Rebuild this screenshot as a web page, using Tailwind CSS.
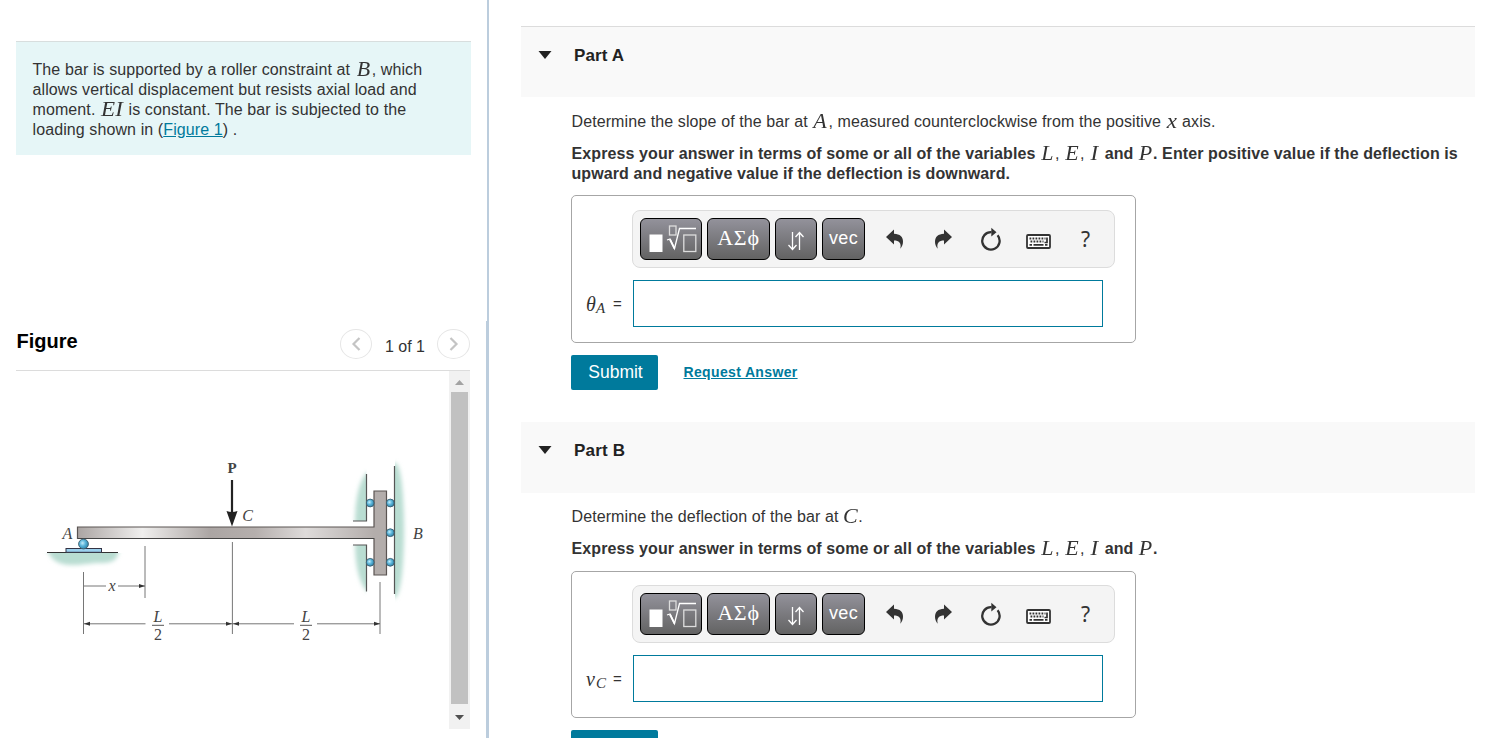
<!DOCTYPE html>
<html lang="en">
<head>
  <meta charset="UTF-8" />
  <title>Bar deflection</title>
  <script src="https://cdn.jsdelivr.net/npm/@tailwindcss/browser@4"></script>
</head>
<body class="bg-white text-[#333] font-['Liberation_Sans',Arial,sans-serif] text-[16px] leading-5 tracking-[0.1px] h-[738px] overflow-hidden">

  <!-- shared icons -->
  <svg class="hidden">
    <symbol id="icon-root" viewBox="0 0 60 40">
      <rect x="8.500" y="15.500" width="13" height="17.500" fill="#fff" />
      <g fill="none" stroke="#ddd" stroke-width="1.3">
        <rect x="28.500" y="7" width="6.500" height="9" />
        <rect x="42.800" y="16" width="12" height="16.500" />
      </g>
      <path d="M26 21l3-1 4.500 9.500 5-20h16.500" fill="none" stroke="#fff" stroke-width="1.300" />
      <path d="M29 20.500l4.500 9" stroke="#fff" stroke-width="1.800" />
    </symbol>
    <symbol id="icon-arrows" viewBox="0 0 18 20">
      <path d="M5.500 1v17M1.500 14l4 4.500 4-4.500M12.500 19V2M8.500 6l4-4.500 4 4.500" fill="none" stroke="#fff" stroke-width="1.300" />
    </symbol>
    <symbol id="icon-undo" viewBox="0 0 18 20">
      <path d="M0 8L8 .5v4.300c6 .2 9 3 9 8 0 2.600-.8 4.700-2.700 7 .6-2.800.5-4.600-.8-6.200-1.200-1.400-3-2-5.500-2v4z" fill="#333" />
    </symbol>
    <symbol id="icon-reset" viewBox="0 0 20 24">
      <path d="M10.500 5.200A8.700 8.700 0 1 0 16.600 8.300" fill="none" stroke="#333" stroke-width="2.300" />
      <path d="M10.300 .8l5.200 4.400-5.200 4.400z" fill="#333" />
    </symbol>
    <symbol id="icon-keyboard" viewBox="0 0 25 16">
      <rect x="1" y="1" width="23" height="13" rx="1" fill="#fff" stroke="#333" stroke-width="1.800" />
      <path d="M3.500 4.500h16M4.500 7.500h13" stroke="#333" stroke-width="2" stroke-dasharray="1.800 1.200" />
      <path d="M3.500 10.800h2.500M7.500 10.800h10M19 10.800h2.500M21 3.500v5h-2.500" fill="none" stroke="#333" stroke-width="1.700" />
    </symbol>
  </svg>

  <div class="flex h-full">
    <!-- left column -->
    <div class="w-[486px] shrink-0 pl-4 pt-[41px] flex flex-col">
      <div class="w-[455px] h-[114px] bg-[#e6f6f7] border-t border-[#d8dede] pl-[16.500px] pt-[18px] whitespace-nowrap">
        The bar is supported by a roller constraint at <i class="inline-block w-[17px] h-5 align-top text-center leading-[18px] font-['Liberation_Serif',serif] text-[20px] scale-x-110">B</i>, which<br>
        allows vertical displacement but resists axial load and<br>
        moment. <i class="inline-block w-[24px] h-5 align-top text-center leading-[18px] font-['Liberation_Serif',serif] text-[20px] scale-x-115">EI</i> is constant. The bar is subjected to the<br>
        loading shown in (<a href="#" class="text-[#007a9c] underline">Figure 1</a>) .
      </div>

      <div class="mt-[166px] w-[454px] h-[50px] border-b border-[#dcdcdc] flex items-start">
        <h2 class="mt-[10px] pl-[0.5px] text-black font-bold text-[20px] tracking-normal grow">Figure</h2>
        <button class="mt-2 w-8 h-[30px] rounded-[50%] border border-[#e6e6e6] flex items-center justify-center">
          <svg class="w-[10px] h-4" viewBox="0 0 10 16"><path d="M8.500 2L2.500 8l6 6" fill="none" stroke="#c4c4c4" stroke-width="2.200" /></svg>
        </button>
        <span class="mt-[16px] w-[65px] pl-px text-center tracking-normal">1 of 1</span>
        <button class="mt-2 w-[33px] h-[30px] rounded-[50%] border border-[#e6e6e6] flex items-center justify-center">
          <svg class="w-[10px] h-4" viewBox="0 0 10 16"><path d="M1.500 2l6 6-6 6" fill="none" stroke="#c4c4c4" stroke-width="2.200" /></svg>
        </button>
      </div>

      <div class="flex w-[454px] h-[358px]">
        <svg class="w-[433px] h-[358px]" viewBox="16 371 433 358" font-family="Liberation Serif, serif" letter-spacing="0">
          <defs>
            <linearGradient id="beam" x1="77" x2="374" gradientUnits="userSpaceOnUse">
              <stop offset="0" stop-color="#aaa4a2" />
              <stop offset=".22" stop-color="#f0efee" />
              <stop offset=".45" stop-color="#aba5a3" />
              <stop offset=".6" stop-color="#b5afad" />
              <stop offset=".77" stop-color="#dedbda" />
              <stop offset="1" stop-color="#b3adab" />
            </linearGradient>
            <radialGradient id="ball" cx=".4" cy=".4" r=".6">
              <stop offset="0" stop-color="#c4ecfa" />
              <stop offset=".5" stop-color="#5bb6da" />
              <stop offset="1" stop-color="#3388af" />
            </radialGradient>
            <filter id="soft" x="-30%" y="-30%" width="160%" height="160%"><feGaussianBlur stdDeviation="2" /></filter>
            <clipPath id="walls"><path d="M40 553h90v30H40zM340 460h26.500v61H340zM340 545h26.500v60H340zM395 455h20v155h-20z" /></clipPath>
          </defs>

          <!-- ground and walls -->
          <g clip-path="url(#walls)">
            <g fill="#b9ddd2" filter="url(#soft)">
              <path d="M46 547h73c0 13-6 16-18 16s-17 2-28 2-22-2-27-18z" />
              <path d="M370 471c-9 3-15 25-15 53h15zM370 542h-15c0 27 6 47 15 51z" />
              <path d="M390 463h6c6 5 8 40 8 67s-2 63-9 68h-5z" />
            </g>
          </g>
          <g fill="none" stroke="#555" stroke-width="1.200">
            <path d="M47 552.500h71" stroke="#333" />
            <path d="M366.500 474v47H353M353 545h13.500v46.500M394.500 466v128" />
          </g>
          <rect x="66" y="548.500" width="35.500" height="3.800" fill="#9bd0ee" stroke="#334" />

          <!-- bar -->
          <path d="M77.500 527H374v-36h12.500v84H374v-36.500H77.500z" fill="url(#beam)" stroke="#5a5452" stroke-width="1.200" />
          <path d="M78 538.500H374" stroke="#444" />
          <g fill="url(#ball)" stroke="#3d5f6e" stroke-width=".9">
            <circle cx="83.500" cy="544" r="4.900" />
            <circle cx="370.200" cy="503" r="3.900" />
            <circle cx="390.300" cy="503" r="3.900" />
            <circle cx="390.300" cy="532.700" r="3.900" />
            <circle cx="370.200" cy="562.300" r="3.900" />
            <circle cx="390.300" cy="562.300" r="3.900" />
          </g>

          <!-- load -->
          <path d="M232 480v34" stroke="#222" stroke-width="2.200" />
          <path d="M226.500 511q5.500 2 11 0L232 526.500z" fill="#222" />

          <!-- dimensions -->
          <path d="M83.500 572v62M145 546v52M232.400 542v92M380 582v52M84 586h22M118 586h27M84 623.800h61.500M169 623.800h125M317 623.800h63" fill="none" stroke="#666" stroke-width=".9" />
          <g fill="#333">
            <path d="M145 586l-6-2v4zM84 623.800l6-2v4zM232 623.800l-6-2v4zM233 623.800l6-2v4zM380 623.800l-6-2v4z" />
          </g>
          <g fill="#444" font-size="16" text-anchor="middle">
            <text x="232" y="473" font-size="15" font-weight="bold">P</text>
            <g font-style="italic">
              <text x="67.500" y="538.500">A</text>
              <text x="247.500" y="521">C</text>
              <text x="418" y="538.500">B</text>
              <text x="112" y="590.500">x</text>
              <text x="158" y="622">L</text>
              <text x="306" y="622">L</text>
            </g>
            <text x="158" y="639.500" font-size="16">2</text>
            <text x="306" y="639.500" font-size="16">2</text>
          </g>
          <path d="M152 625.300h12M300 625.300h12" stroke="#555" />
        </svg>
        <!-- scrollbar -->
        <div class="w-[21px] bg-[#f1f1f1] flex flex-col items-center justify-between">
          <svg class="w-[9px] h-[21px]" viewBox="0 0 9 21"><path d="M0 14l4.500-5L9 14z" fill="#a3a3a3" /></svg>
          <div class="w-[17px] grow bg-[#c1c1c1]"></div>
          <svg class="w-[9px] h-[25px]" viewBox="0 0 9 25"><path d="M0 11l4.500 5L9 11z" fill="#505050" /></svg>
        </div>
      </div>
    </div>

    <!-- divider, a pixel wider beside the figure -->
    <div class="w-[3px] shrink-0 flex flex-col items-end">
      <div class="w-[2px] h-[321px] bg-[#bccddd]"></div>
      <div class="w-[3px] grow bg-[#bccddd]"></div>
    </div>

    <!-- right column -->
    <div class="pl-8 pt-[26px] w-[986px]">
      <section>
        <div class="h-[71px] bg-[#f9f9f9] border-t border-[#dcdcdc] flex items-start pl-[17px] pt-[19px]">
          <svg class="w-[14px] h-5 mr-[22px]" viewBox="0 0 14 20"><path d="M.5 5h13L7 13z" fill="#222" /></svg>
          <h3 class="font-bold text-[17px] text-[#222] tracking-[0.1px]">Part A</h3>
        </div>
        <div class="pl-[50px] pt-[15px]">
          <p class="whitespace-nowrap h-5 pl-[0.5px]">Determine the slope of the bar at <i class="inline-block w-[16px] h-5 align-top text-center leading-[18px] font-['Liberation_Serif',serif] text-[20px] scale-x-110">A</i>, measured counterclockwise from the positive <i class="inline-block w-[12px] h-5 align-top text-center leading-[19px] font-['Liberation_Serif',serif] text-[20px] scale-x-115">x</i> axis.</p>
          <p class="mt-3 h-10 pl-[0.5px] font-bold whitespace-nowrap">Express your answer in terms of some or all of the variables <i class="inline-block w-[15px] h-5 align-top text-center leading-[18px] font-['Liberation_Serif',serif] text-[20px] font-normal scale-x-110">L</i><span class="font-normal">,</span> <i class="inline-block w-[16px] h-5 align-top text-center leading-[18px] font-['Liberation_Serif',serif] text-[20px] font-normal scale-x-110">E</i><span class="font-normal">,</span> <i class="inline-block w-[11px] h-5 align-top text-center leading-[18px] font-['Liberation_Serif',serif] text-[20px] font-normal scale-x-115">I</i> and <i class="inline-block w-[15px] h-5 align-top text-center leading-[18px] font-['Liberation_Serif',serif] text-[20px] font-normal scale-x-110">P</i>. Enter positive value if the deflection is<br>upward and negative value if the deflection is downward.</p>

          <div class="mt-[11px] w-[565px] h-[148px] border border-[#a6a6a6] rounded-[5px] pt-[14px]">
            <div class="ml-[60px] w-[483px] h-[58px] bg-[#f4f4f4] border border-[#dcdcdc] rounded-lg flex items-start pl-[7px] pt-[7px]">
              <button class="w-[62px] h-[42px] rounded-md border border-black bg-linear-to-b from-[#93929b] to-[#636363]"><svg class="w-[60px] h-10"><use href="#icon-root" /></svg></button>
              <button class="ml-[5px] w-[63px] h-[42px] rounded-md border border-black bg-linear-to-b from-[#93929b] to-[#636363] text-white font-['Liberation_Serif',serif] text-[22px] tracking-[0.8px] pb-[2px]">ΑΣϕ</button>
              <button class="ml-[5px] w-[42px] h-[42px] rounded-md border border-black bg-linear-to-b from-[#93929b] to-[#636363] flex items-center justify-center"><svg class="w-[18px] h-5 mt-1"><use href="#icon-arrows" /></svg></button>
              <button class="ml-[5px] w-[43px] h-[42px] rounded-md border border-black bg-linear-to-b from-[#93929b] to-[#636363] text-white text-[18px] tracking-[0.4px] pb-[3px]">vec</button>
              <svg class="ml-[21px] mt-[11px] w-[18px] h-5"><use href="#icon-undo" /></svg>
              <svg class="ml-[30px] mt-[11px] w-[18px] h-5 -scale-x-100"><use href="#icon-undo" /></svg>
              <svg class="ml-[29px] mt-[9px] w-5 h-6"><use href="#icon-reset" /></svg>
              <svg class="ml-[25px] mt-[16px] w-[25px] h-4"><use href="#icon-keyboard" /></svg>
              <span class="ml-[30px] mt-[11px] text-[21px] font-['Noto_Sans',sans-serif]">?</span>
            </div>
            <div class="mt-3 flex items-center">
              <div class="w-[61px] pl-[14px] flex items-center">
                <i class="w-[10px] font-['Liberation_Serif',serif] text-[20px]">θ</i>
                <i class="w-[17px] mt-[9px] font-['Liberation_Serif',serif] text-[15px]">A</i>
                <span class="text-[15px]">=</span>
              </div>
              <input type="text" class="w-[470px] h-[47px] border border-[#007a9c] bg-white outline-none" />
            </div>
          </div>

          <div class="mt-3 flex items-center">
            <button class="w-[87px] h-[35px] bg-[#007a9c] text-white text-[17.500px] tracking-normal rounded-[2px] pl-[2px] pb-[2px]">Submit</button>
            <a href="#" class="ml-[25.500px] mb-[2px] text-[#007a9c] font-bold text-[14px] tracking-[0.35px] underline">Request Answer</a>
          </div>
        </div>
      </section>

      <section class="mt-8">
        <div class="h-[71px] bg-[#f9f9f9] flex items-start pl-[17px] pt-[19px]">
          <svg class="w-[14px] h-5 mr-[22px]" viewBox="0 0 14 20"><path d="M.5 5h13L7 13z" fill="#222" /></svg>
          <h3 class="font-bold text-[17px] text-[#222] tracking-[0.2px]">Part B</h3>
        </div>
        <div class="pl-[50px] pt-[14px]">
          <p class="whitespace-nowrap h-5 pl-[0.5px]">Determine the deflection of the bar at <i class="inline-block w-[15px] h-5 align-top text-center leading-[18px] font-['Liberation_Serif',serif] text-[20px] scale-x-110">C</i>.</p>
          <p class="mt-3 h-5 pl-[0.5px] font-bold whitespace-nowrap">Express your answer in terms of some or all of the variables <i class="inline-block w-[15px] h-5 align-top text-center leading-[18px] font-['Liberation_Serif',serif] text-[20px] font-normal scale-x-110">L</i><span class="font-normal">,</span> <i class="inline-block w-[16px] h-5 align-top text-center leading-[18px] font-['Liberation_Serif',serif] text-[20px] font-normal scale-x-110">E</i><span class="font-normal">,</span> <i class="inline-block w-[11px] h-5 align-top text-center leading-[18px] font-['Liberation_Serif',serif] text-[20px] font-normal scale-x-115">I</i> and <i class="inline-block w-[15px] h-5 align-top text-center leading-[18px] font-['Liberation_Serif',serif] text-[20px] font-normal scale-x-110">P</i>.</p>

          <div class="mt-3 w-[565px] h-[147px] border border-[#a6a6a6] rounded-[5px] pt-[13px]">
            <div class="ml-[60px] w-[483px] h-[58px] bg-[#f4f4f4] border border-[#dcdcdc] rounded-lg flex items-start pl-[7px] pt-[7px]">
              <button class="w-[62px] h-[42px] rounded-md border border-black bg-linear-to-b from-[#93929b] to-[#636363]"><svg class="w-[60px] h-10"><use href="#icon-root" /></svg></button>
              <button class="ml-[5px] w-[63px] h-[42px] rounded-md border border-black bg-linear-to-b from-[#93929b] to-[#636363] text-white font-['Liberation_Serif',serif] text-[22px] tracking-[0.8px] pb-[2px]">ΑΣϕ</button>
              <button class="ml-[5px] w-[42px] h-[42px] rounded-md border border-black bg-linear-to-b from-[#93929b] to-[#636363] flex items-center justify-center"><svg class="w-[18px] h-5 mt-1"><use href="#icon-arrows" /></svg></button>
              <button class="ml-[5px] w-[43px] h-[42px] rounded-md border border-black bg-linear-to-b from-[#93929b] to-[#636363] text-white text-[18px] tracking-[0.4px] pb-[3px]">vec</button>
              <svg class="ml-[21px] mt-[11px] w-[18px] h-5"><use href="#icon-undo" /></svg>
              <svg class="ml-[30px] mt-[11px] w-[18px] h-5 -scale-x-100"><use href="#icon-undo" /></svg>
              <svg class="ml-[29px] mt-[9px] w-5 h-6"><use href="#icon-reset" /></svg>
              <svg class="ml-[25px] mt-[16px] w-[25px] h-4"><use href="#icon-keyboard" /></svg>
              <span class="ml-[30px] mt-[11px] text-[21px] font-['Noto_Sans',sans-serif]">?</span>
            </div>
            <div class="mt-3 flex items-center">
              <div class="w-[61px] pl-[14px] flex items-center">
                <i class="w-[10px] font-['Liberation_Serif',serif] text-[20px]">v</i>
                <i class="w-[17px] mt-[9px] font-['Liberation_Serif',serif] text-[15px]">C</i>
                <span class="text-[15px]">=</span>
              </div>
              <input type="text" class="w-[470px] h-[47px] border border-[#007a9c] bg-white outline-none" />
            </div>
          </div>

          <button aria-label="Submit" class="block mt-3 w-[87px] h-[35px] bg-[#007a9c] rounded-[2px]"></button>
        </div>
      </section>
    </div>
  </div>

</body>
</html>
